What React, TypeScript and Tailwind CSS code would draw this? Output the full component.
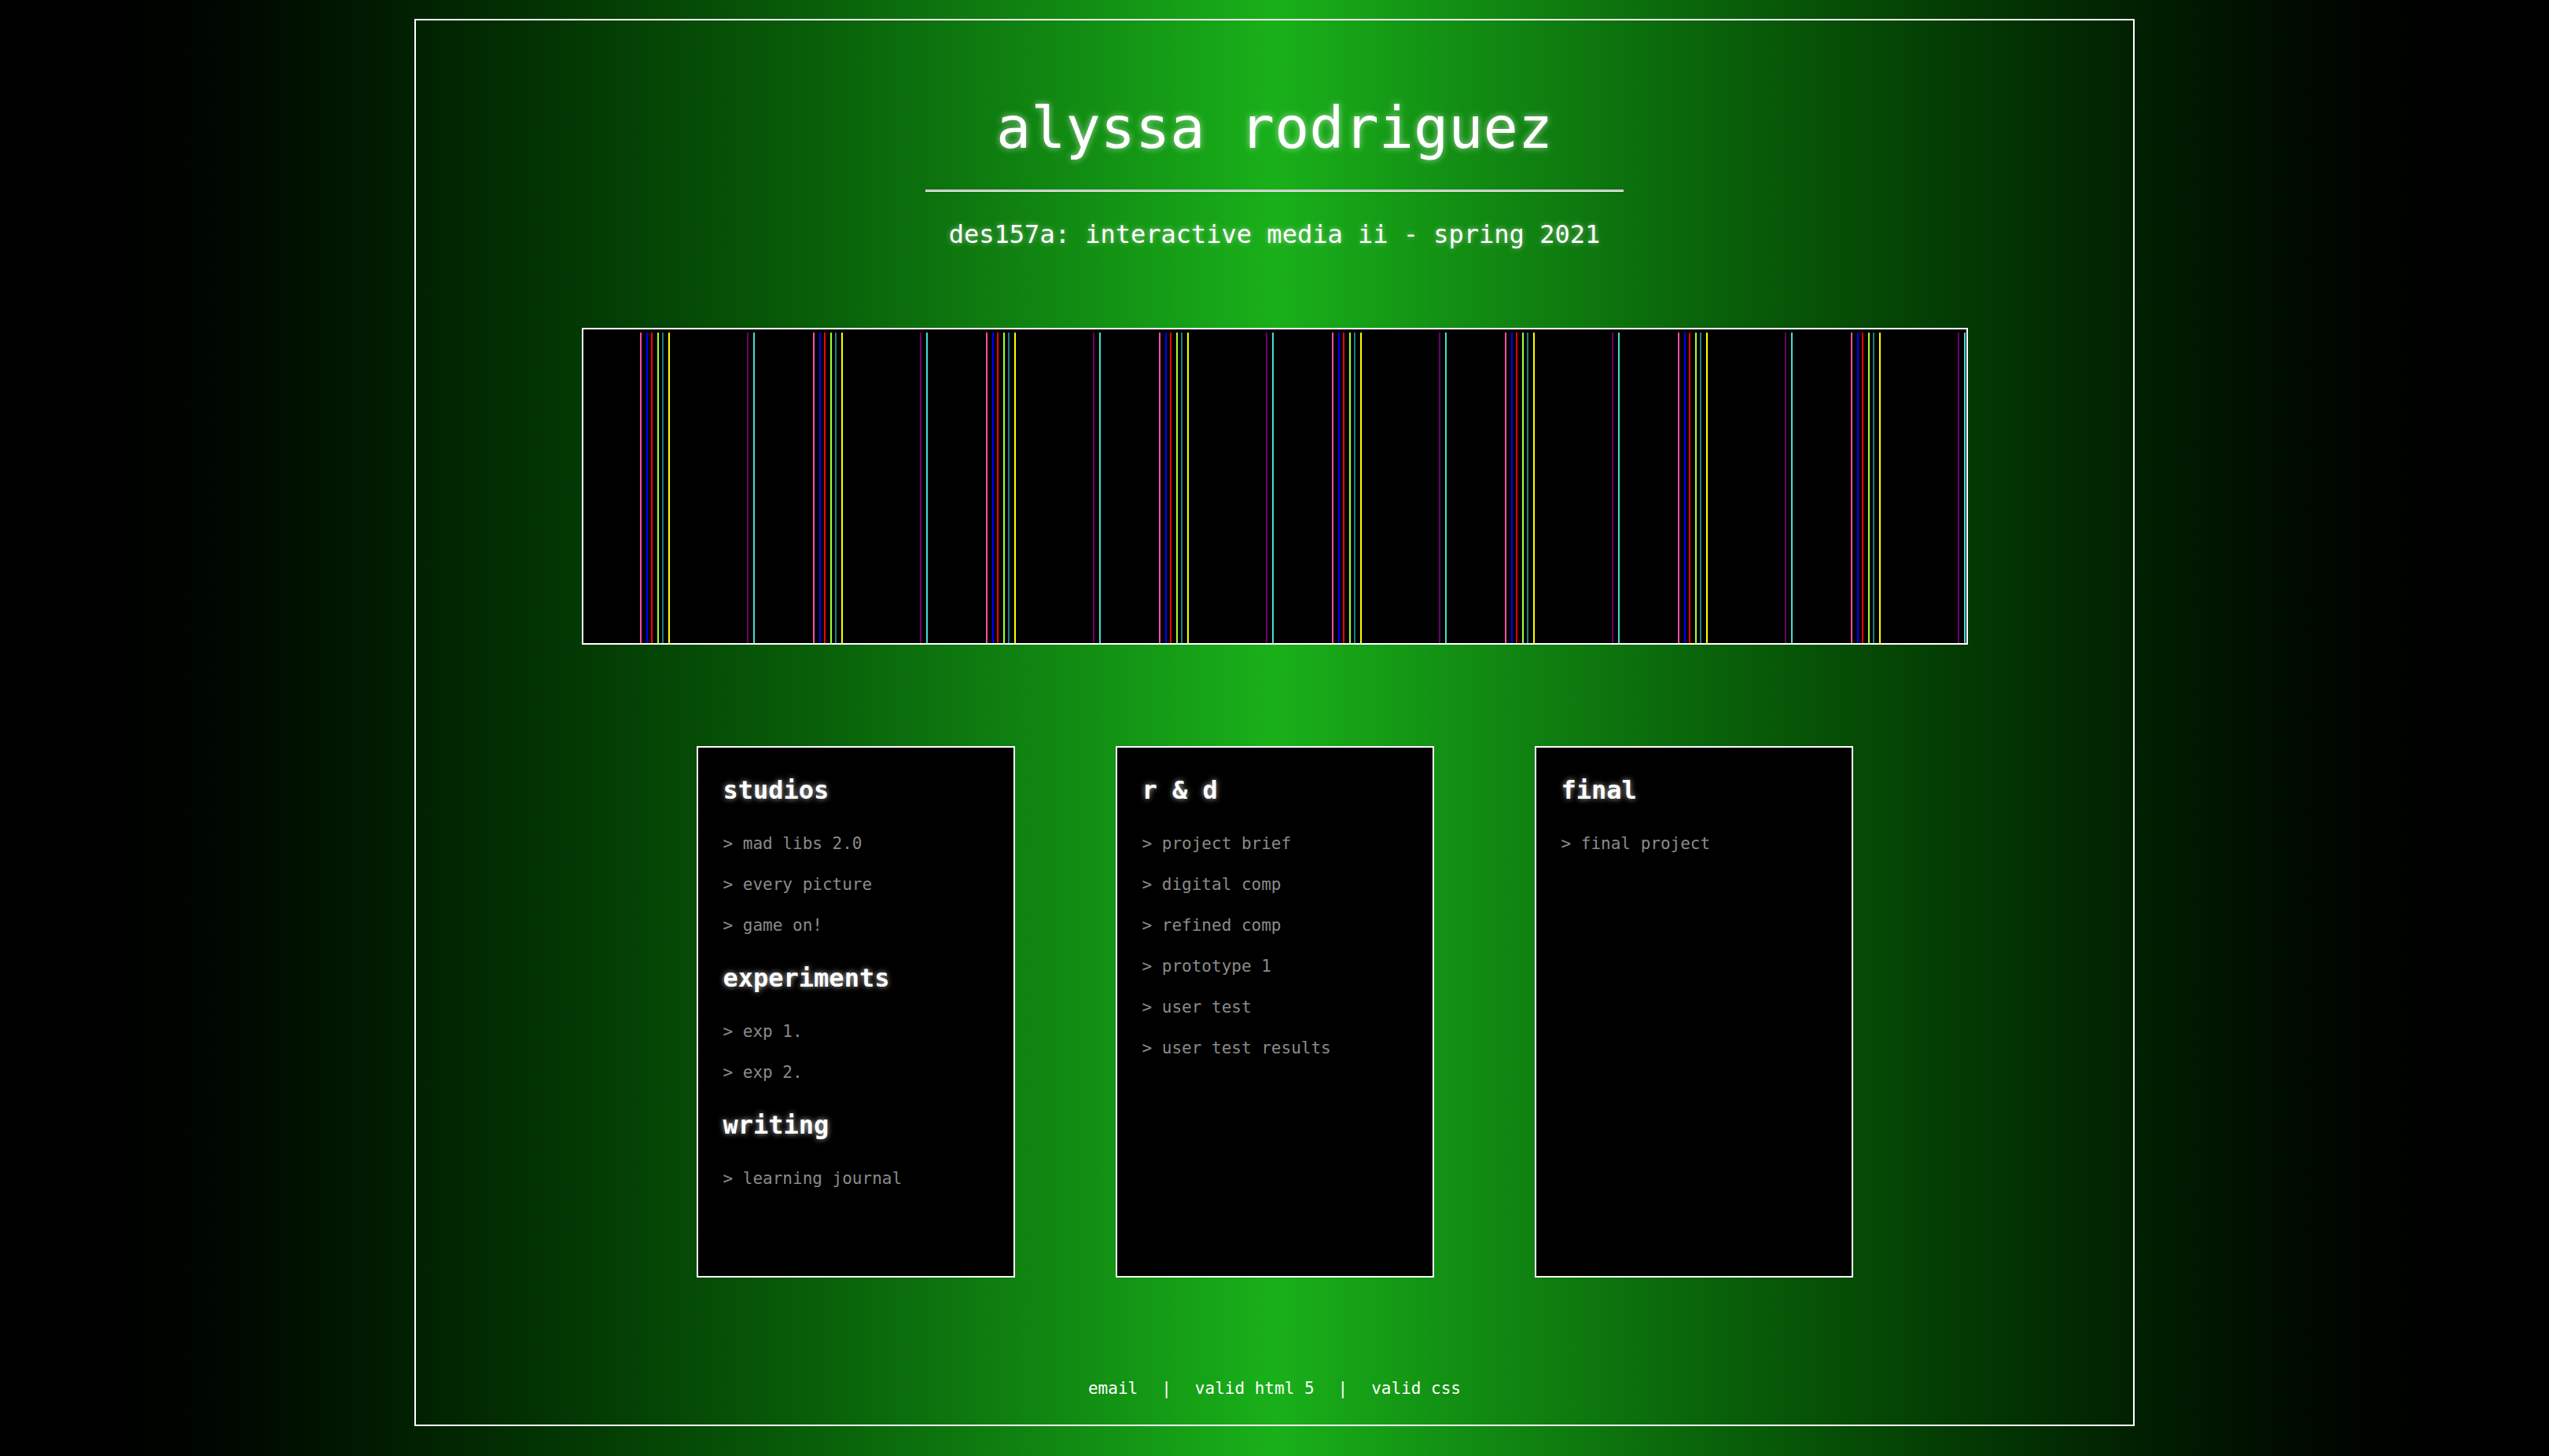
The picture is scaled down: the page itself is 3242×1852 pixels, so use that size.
import React from "react";

const mono = { fontFamily: '"DejaVu Sans Mono", "Liberation Mono", monospace' };

const groupA = [
  { o: 0, c: "#ff4fa3" },
  { o: 8, c: "#0000ff" },
  { o: 14, c: "#ff0000" },
  { o: 22, c: "#a8ff2f" },
  { o: 28, c: "#1f7d7b" },
  { o: 36, c: "#ffff00" },
];
const groupB = [
  { o: 136, c: "#6b006b" },
  { o: 144, c: "#40e0d0" },
];

function Banner() {
  const lines: { x: number; c: string }[] = [];
  for (let k = 0; k < 8; k++) {
    const base = 72 + 220 * k;
    for (const g of groupA) lines.push({ x: base + g.o, c: g.c });
    for (const g of groupB) lines.push({ x: base + g.o, c: g.c });
  }
  return (
    <div className="w-[1763px] h-[403px] border-2 border-white bg-black pt-[4px] mt-[100px]">
      <svg width="1759" height="395" viewBox="0 0 1759 395" className="block">
        {lines.map((l, i) => (
          <rect key={i} x={l.x} y={0} width={2} height={395} fill={l.c} />
        ))}
      </svg>
    </div>
  );
}

type Section = { title: string; items: string[] };

function Card({ sections }: { sections: Section[] }) {
  return (
    <div className="w-[405px] h-[676px] border-2 border-white bg-black pt-[34px] px-[32px]">
      {sections.map((s, i) => (
        <div key={s.title} className={i > 0 ? "mt-[21px]" : ""}>
          <h2 className="text-[32px] leading-[40px] font-bold text-white whitespace-pre [text-shadow:0_0_7px_rgba(255,255,255,0.7)]">
            {s.title}
          </h2>
          <ul className="mt-[22px]">
            {s.items.map((it) => (
              <li key={it} className="text-[21px] leading-[52px] h-[52px] text-[#8a8a8a] whitespace-pre">
                {"> " + it}
              </li>
            ))}
          </ul>
        </div>
      ))}
    </div>
  );
}

export default function App() {
  return (
    <div
      className="min-h-screen w-full bg-gradient-to-r from-black via-[#19b01a] to-black pt-[24px]"
      style={mono}
    >
      <div className="mx-auto w-[2188px] h-[1790px] border-2 border-white flex flex-col items-center">
        <h1 className="mt-[95px] text-[73.5px] leading-[84px] text-white font-normal [text-shadow:0_0_8px_rgba(255,255,255,0.6)]">
          alyssa rodriguez
        </h1>
        <div className="mt-[36px] w-[888px] h-[3px] bg-[#c9c9c9] border-b border-[#eeeeee]" />
        <p className="mt-[35px] text-[32px] leading-[38px] text-white [text-shadow:0_0_6px_rgba(255,255,255,0.5)]">
          des157a: interactive media ii - spring 2021
        </p>
        <Banner />
        <div className="mt-[129px] grid grid-cols-3 gap-x-[128px]">
          <Card
            sections={[
              { title: "studios", items: ["mad libs 2.0", "every picture", "game on!"] },
              { title: "experiments", items: ["exp 1.", "exp 2."] },
              { title: "writing", items: ["learning journal"] },
            ]}
          />
          <Card
            sections={[
              {
                title: "r & d",
                items: [
                  "project brief",
                  "digital comp",
                  "refined comp",
                  "prototype 1",
                  "user test",
                  "user test results",
                ],
              },
            ]}
          />
          <Card sections={[{ title: "final", items: ["final project"] }]} />
        </div>
        <footer className="mt-[129px] flex text-[21px] leading-[24px] text-white">
          <a href="#" className="text-white">email</a>
          <span className="px-[30px]">|</span>
          <a href="#" className="text-white">valid html 5</a>
          <span className="px-[30px]">|</span>
          <a href="#" className="text-white">valid css</a>
        </footer>
      </div>
    </div>
  );
}
